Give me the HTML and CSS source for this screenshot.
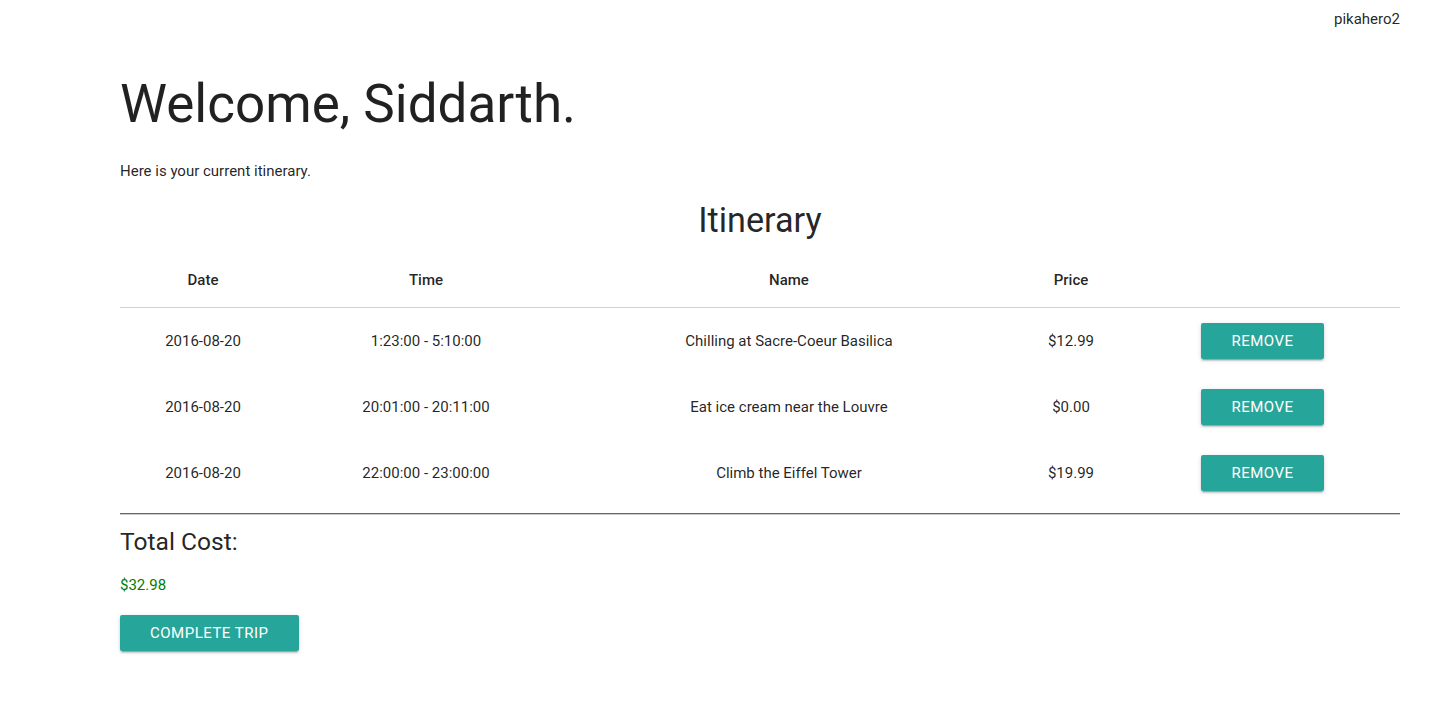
FILE: index.html
```html
<!DOCTYPE html>
<html>
<head>
<meta charset="utf-8">
<link rel="stylesheet" href="styles.css">
</head>
<body>
<header class="topbar"><span class="user">pikahero2</span></header>
<main class="container">
  <h1 class="welcome">Welcome, Siddarth.</h1>
  <p class="intro">Here is your current itinerary.</p>
  <h2 class="section-title">Itinerary</h2>
  <table class="itinerary">
    <colgroup>
      <col class="c-date"><col class="c-time"><col class="c-name"><col class="c-price"><col class="c-action">
    </colgroup>
    <thead>
      <tr><th>Date</th><th>Time</th><th>Name</th><th>Price</th><th></th></tr>
    </thead>
    <tbody>
      <tr><td>2016-08-20</td><td>1:23:00 - 5:10:00</td><td>Chilling at Sacre-Coeur Basilica</td><td>$12.99</td><td class="action"><button class="btn">Remove</button></td></tr>
      <tr><td>2016-08-20</td><td>20:01:00 - 20:11:00</td><td>Eat ice cream near the Louvre</td><td>$0.00</td><td class="action"><button class="btn">Remove</button></td></tr>
      <tr><td>2016-08-20</td><td>22:00:00 - 23:00:00</td><td>Climb the Eiffel Tower</td><td>$19.99</td><td class="action"><button class="btn">Remove</button></td></tr>
    </tbody>
  </table>
  <hr class="divider">
  <h3 class="total-label">Total Cost:</h3>
  <p class="total">$32.98</p>
  <button class="btn">Complete Trip</button>
</main>
</body>
</html>
```

FILE: styles.css
```css
html { font-size: 15px; }
body {
  margin: 0;
  font-family: Roboto, "Liberation Sans", sans-serif;
  font-size: 15px;
  line-height: 1.5;
  color: rgba(0,0,0,0.87);
  background: #fff;
}
.topbar {
  display: flex;
  justify-content: flex-end;
  padding: 8px 37px 0 0;
  height: 30px;
}
.user { font-size: 15px; line-height: 22px; }
.container {
  padding: 0 37px 40px 120px;
}
.welcome {
  font-size: 53px;
  font-weight: 400;
  line-height: 1.1;
  margin: 37px 0 27px;
}
.intro { margin: 0; }
.section-title {
  font-size: 34.2px;
  font-weight: 400;
  line-height: 1.1;
  text-align: center;
  margin: 19px 0 0;
}
.itinerary {
  width: 100%;
  border-collapse: collapse;
  margin-top: 15px;
  table-layout: fixed;
}
.c-date { width: 166px; }
.c-time { width: 280px; }
.c-name { width: 446px; }
.c-price { width: 118px; }
.c-action { width: 270px; }
.itinerary th, .itinerary td {
  padding: 15px 5px;
  text-align: center;
  font-size: 15px;
  line-height: 22px;
}
.itinerary th { font-weight: 500; padding-bottom: 16px; }
.itinerary td.action { padding-right: 10px; }
.itinerary thead tr { border-bottom: 1px solid #d0d0d0; }
.btn {
  display: inline-block;
  height: 36px;
  line-height: 36px;
  padding: 0 30px;
  border: none;
  border-radius: 2px;
  background: #26a69a;
  color: #fff;
  font-family: Roboto, "Liberation Sans", sans-serif;
  font-size: 15px;
  letter-spacing: .5px;
  text-transform: uppercase;
  vertical-align: middle;
  cursor: pointer;
  box-shadow: 0 2px 2px 0 rgba(0,0,0,.14), 0 1px 5px 0 rgba(0,0,0,.12), 0 3px 1px -2px rgba(0,0,0,.2);
}
.divider {
  border: none;
  border-top: 1px solid #666;
  border-bottom: 1px solid #ccc;
  margin: 7px 0 0;
  height: 0;
}
.total-label {
  font-size: 24.6px;
  font-weight: 400;
  line-height: 1.1;
  margin: 13px 0 0;
}
.total {
  color: green;
  margin: 19px 0 18px;
}
```
